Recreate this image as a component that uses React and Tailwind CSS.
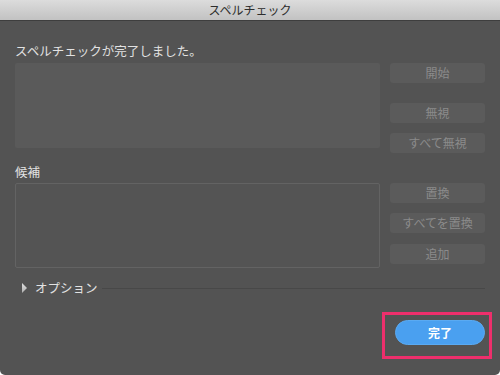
import React from "react";

function Btn({ children, className = "" }) {
  return (
    <div
      className={
        "h-[20px] w-[95px] rounded-[3px] bg-[#5b5b5b] text-[#8b8b8b] text-[12px] leading-[20px] text-center " +
        className
      }
    >
      {children}
    </div>
  );
}

export default function App() {
  return (
    <div className="w-[500px] h-[375px] bg-white font-['Noto_Sans_CJK_JP',sans-serif]">
      <div className="w-[500px] h-[375px] bg-[#535353] rounded-b-[5px] overflow-hidden flex flex-col">
        <div className="h-[21px] shrink-0 bg-gradient-to-b from-[#dcdcdc] to-[#c2c2c2] border-b border-[#3e3e3e] text-[12px] leading-[20px] text-center text-[#2d2d2d]">
          スペルチェック
        </div>
        <div className="px-[15px] pt-[20px] flex flex-col">
          <div className="h-[19px] leading-[19px] text-[12.5px] text-[#e2e2e2] mb-[3px]">
            スペルチェックが完了しました。
          </div>
          <div className="flex items-start">
            <div className="w-[365px] h-[85px] rounded-[2px] bg-[#5a5a5a]" />
            <div className="ml-[10px] flex flex-col">
              <Btn>開始</Btn>
              <Btn className="mt-[20px]">無視</Btn>
              <Btn className="mt-[10px]">すべて無視</Btn>
            </div>
          </div>
          <div className="mt-[9px] h-[19px] leading-[19px] text-[12.5px] text-[#e2e2e2] mb-[2px]">
            候補
          </div>
          <div className="flex items-start">
            <div className="w-[365px] h-[85px] rounded-[2px] border border-[#636363] bg-[#545454]" />
            <div className="ml-[10px] flex flex-col">
              <Btn>置換</Btn>
              <Btn className="mt-[10px]">すべてを置換</Btn>
              <Btn className="mt-[11px]">追加</Btn>
            </div>
          </div>
          <div className="mt-[10px] h-[19px] flex items-center">
            <svg width="12" height="10" viewBox="0 0 12 10" className="ml-[6px] mr-[2px]">
              <defs>
                <linearGradient id="tri" x1="0" y1="0" x2="0" y2="1">
                  <stop offset="0" stopColor="#e0e0e0" />
                  <stop offset="1" stopColor="#b0b0b0" />
                </linearGradient>
              </defs>
              <path d="M1 0 L6 5 L1 10 Z" fill="url(#tri)" />
            </svg>
            <span className="text-[12.5px] leading-[19px] text-[#e2e2e2]">オプション</span>
            <div className="flex-1 ml-[4px] h-px bg-[#484848] mt-[1px]" />
          </div>
          <div className="mt-[15px] flex justify-end -mr-[7px]">
            <div className="border-[3px] border-[#ee2f6c] pl-[10px] pr-[4px] pt-[5px] pb-[11px]">
              <div className="w-[90px] h-[25px] rounded-full bg-[#4aa0f0] border border-[#5aaaf2] text-white text-[12px] leading-[23px] text-center font-bold">
                完了
              </div>
            </div>
          </div>
        </div>
      </div>
    </div>
  );
}
